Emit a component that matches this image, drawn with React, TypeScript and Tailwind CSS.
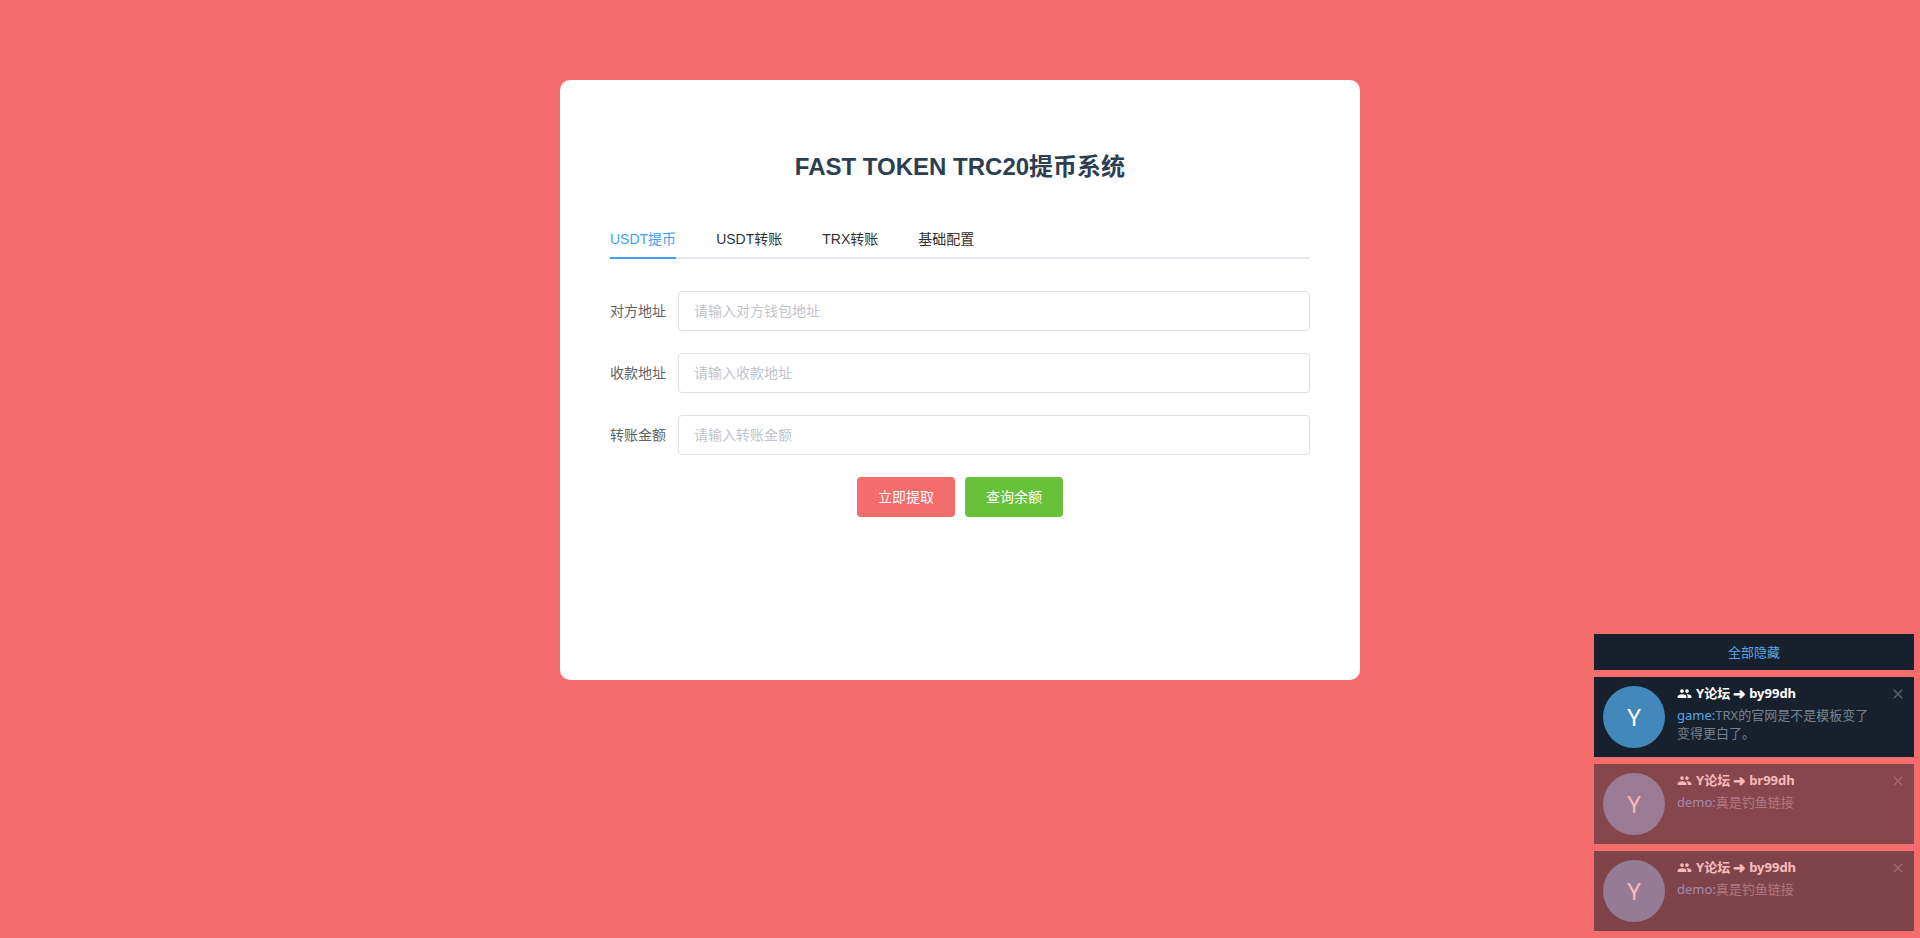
import { MdPeople, MdClose } from 'react-icons/md';

const tabs = ['USDT提币', 'USDT转账', 'TRX转账', '基础配置'];

const fields = [
  { label: '对方地址', placeholder: '请输入对方钱包地址' },
  { label: '收款地址', placeholder: '请输入收款地址' },
  { label: '转账金额', placeholder: '请输入转账金额' },
];

const notices = [
  { from: 'Y论坛', to: 'by99dh', user: 'game:', text: 'TRX的官网是不是模板变了变得更白了。', fade: '' },
  { from: 'Y论坛', to: 'br99dh', user: 'demo:', text: '真是钓鱼链接', fade: 'opacity-[0.5]' },
  { from: 'Y论坛', to: 'by99dh', user: 'demo:', text: '真是钓鱼链接', fade: 'opacity-[0.53]' },
];

export default function App() {
  return (
    <div className="min-h-[938px] bg-[#f56c6c] pt-[80px] font-['Liberation_Sans','Noto_Sans_CJK_SC',sans-serif] overflow-hidden">
      <div className="mx-auto h-[600px] w-[800px] rounded-[10px] bg-white px-[50px] pt-[70px]">
        <h1 className="text-center text-[24px] leading-[34px] font-bold text-[#2c3e50]">FAST TOKEN TRC20提币系统</h1>

        <div className="mt-[35px] flex h-[40px] border-b-2 border-[#e4e7ed]">
          {tabs.map((tab, i) => (
            <div key={tab} className={i === 0 ? 'h-[40px] border-b-2 border-[#409eff] pr-0 text-[14px] leading-[40px] text-[#409eff]' : 'h-[40px] pl-[40px] text-[14px] leading-[40px] text-[#303133]'}>
              {tab}
            </div>
          ))}
        </div>

        <div className="mt-[32px] flex flex-col gap-[22px]">
          {fields.map((f) => (
            <div key={f.label} className="flex items-center">
              <label className="w-[68px] text-[14px] text-[#606266]">{f.label}</label>
              <input
                type="text"
                placeholder={f.placeholder}
                className="h-[40px] flex-1 rounded-[4px] border border-[#dcdfe6] bg-white px-[15px] text-[14px] outline-none placeholder:text-[#c0c4cc]"
              />
            </div>
          ))}
        </div>

        <div className="mt-[22px] flex justify-center gap-[10px]">
          <button className="h-[40px] w-[98px] rounded-[4px] bg-[#f56c6c] text-[14px] text-white">立即提取</button>
          <button className="h-[40px] w-[98px] rounded-[4px] bg-[#67c23a] text-[14px] text-white">查询余额</button>
        </div>
      </div>

      <div className="fixed right-[6px] bottom-[7px] flex w-[320px] flex-col gap-[7px] font-['Noto_Sans','Noto_Sans_CJK_SC',sans-serif]">
        <div className="h-[36px] bg-[#17212d] text-center text-[13px] leading-[36px] text-[#5aa5e8]">全部隐藏</div>
        {notices.map((n, i) => (
          <div key={i} className={`relative flex h-[80px] bg-[#17212d] pt-[8px] pr-[9px] pl-[9px] ${n.fade}`}>
            <div className="mt-[1px] flex h-[62px] w-[62px] shrink-0 items-center justify-center rounded-full bg-[#4288ba] text-[24px] text-white">Y</div>
            <div className="ml-[12px] w-[195px]">
              <div className="flex items-center text-[13px] leading-[16px] font-bold text-white">
                <MdPeople className="mr-[4px] h-[15px] w-[15px]" />
                <span>{n.from}</span>
                <span className="mx-[3px] text-[15px]">➜</span>
                <span>{n.to}</span>
              </div>
              <div className="mt-[5px] text-[13px] leading-[18px] text-[#768391]">
                <span className="text-[#5aa5e8]">{n.user}</span>
                {n.text}
              </div>
            </div>
            <MdClose className="absolute top-[9px] right-[8px] h-[16px] w-[16px] text-[#5b646e]" />
          </div>
        ))}
      </div>
    </div>
  );
}
